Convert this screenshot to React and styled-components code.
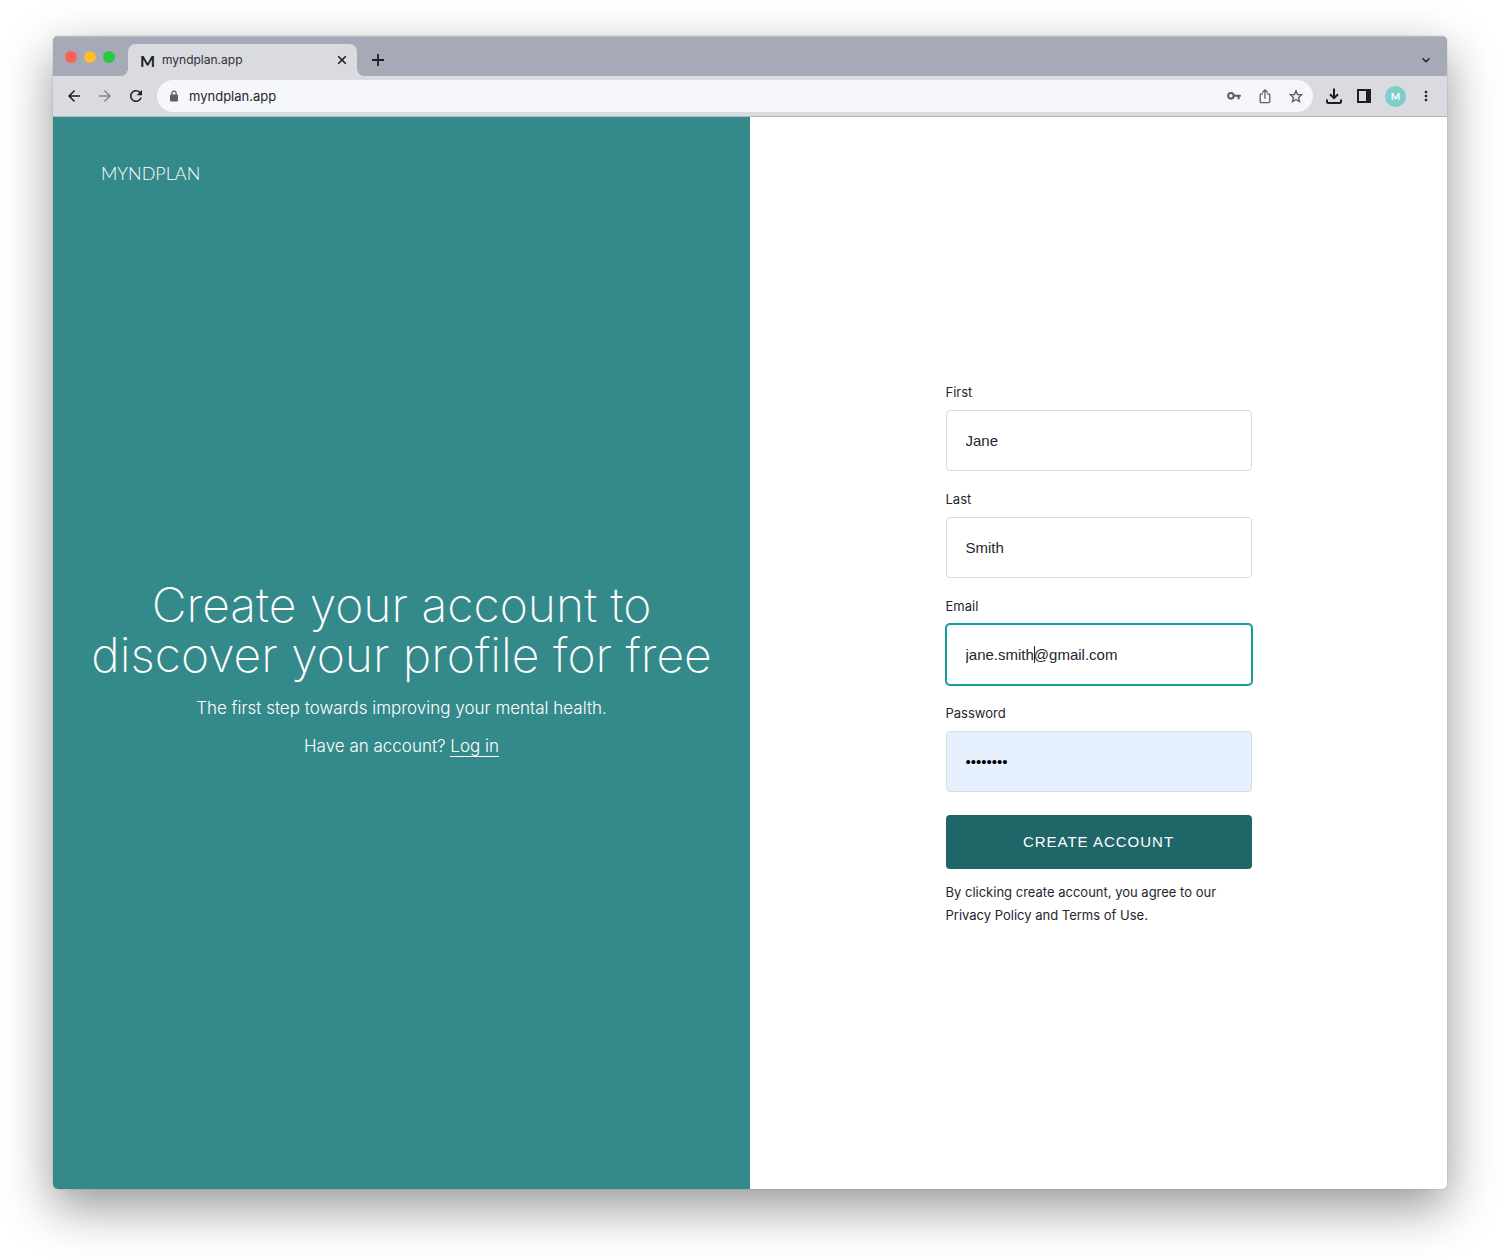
import React, { useState } from "react";
import styled, { createGlobalStyle, css } from "styled-components";
import {
  MdArrowBack,
  MdArrowForward,
  MdKeyboardArrowDown,
  MdMoreVert,
  MdRefresh,
} from "react-icons/md";

const fields = [
  { id: "first", label: "First", type: "text", value: "Jane" },
  { id: "last", label: "Last", type: "text", value: "Smith" },
  { id: "email", label: "Email", type: "email", value: "jane.smith@gmail.com", active: true },
  { id: "password", label: "Password", type: "password", value: "password", filled: true },
];

function CloseIcon() {
  return (
    <svg width="14" height="14" viewBox="0 0 14 14" stroke="#1d1e22" strokeWidth="1.6">
      <path d="M3.2 3.2l7.6 7.6M10.8 3.2l-7.6 7.6" />
    </svg>
  );
}

function PlusIcon() {
  return (
    <svg width="16" height="16" viewBox="0 0 16 16" stroke="#1d1e22" strokeWidth="1.8">
      <path d="M8 2v12M2 8h12" />
    </svg>
  );
}

function LockIcon() {
  return (
    <svg width="12" height="12" viewBox="0 0 12 12">
      <rect x="2" y="4.4" width="8" height="7" rx="1" fill="#5c5e66" />
      <path d="M3.9 5V3.2a2.1 2.1 0 0 1 4.2 0V5" fill="none" stroke="#5c5e66" strokeWidth="1.3" />
    </svg>
  );
}

function KeyIcon() {
  return (
    <svg width="16" height="16" viewBox="0 0 16 16" fill="none" stroke="#5c5e66">
      <circle cx="4.9" cy="7.8" r="2.8" strokeWidth="2.1" />
      <path d="M7.6 7.8h7.2M12.6 7.8v3.4" strokeWidth="2" />
    </svg>
  );
}

function ShareIcon() {
  return (
    <svg width="16" height="16" viewBox="0 0 16 16" fill="none" stroke="#5c5e66" strokeWidth="1.3">
      <path
        d="M6 5.8H4.4c-.7 0-1.2.5-1.2 1.2v6.5c0 .7.5 1.2 1.2 1.2h7.2c.7 0 1.2-.5 1.2-1.2V7c0-.7-.5-1.2-1.2-1.2H10"
      />
      <path d="M8 10.8V2.2M5.4 4.5L8 1.9l2.6 2.6" />
    </svg>
  );
}

function StarIcon() {
  return (
    <svg width="16" height="16" viewBox="0 0 16 16" fill="none" stroke="#5c5e66" strokeWidth="1.4">
      <path d="M8 2.8l1.6 3.7 4 .4-3 2.7.9 4L8 11.5l-3.5 2.1.9-4-3-2.7 4-.4z" />
    </svg>
  );
}

function DownloadIcon() {
  return (
    <svg width="18" height="18" viewBox="0 0 18 18" fill="none" stroke="#1d1e22" strokeWidth="2">
      <path d="M9 1.5v9M5 7.2l4 4 4-4M2 12.5v2.2c0 .7.6 1.3 1.3 1.3h11.4c.7 0 1.3-.6 1.3-1.3v-2.2" />
    </svg>
  );
}

function SidePanelIcon() {
  return (
    <svg width="14" height="14" viewBox="0 0 14 14">
      <path d="M1 1h12v12H1z" fill="none" stroke="#1d1e22" strokeWidth="2" />
      <path d="M9 1h4v12H9z" fill="#1d1e22" />
    </svg>
  );
}

function Browser({ children }) {
  return (
    <Window>
      <TabBar>
        <Lights>
          <Light $color="#ff5f57" />
          <Light $color="#febc2e" />
          <Light $color="#28c840" />
        </Lights>
        <Tab>
          <Favicon>M</Favicon>
          <TabTitle>myndplan.app</TabTitle>
          <IconButton aria-label="Close tab" $size={14}>
            <CloseIcon />
          </IconButton>
        </Tab>
        <IconButton aria-label="New tab" $size={16}>
          <PlusIcon />
        </IconButton>
        <Spacer />
        <IconButton aria-label="Search tabs" $size={16}>
          <MdKeyboardArrowDown />
        </IconButton>
      </TabBar>
      <Toolbar>
        <NavButtons>
          <IconButton aria-label="Back" $size={18}>
            <MdArrowBack />
          </IconButton>
          <IconButton aria-label="Forward" $size={18} $color="#86888f">
            <MdArrowForward />
          </IconButton>
          <IconButton aria-label="Reload" $size={18}>
            <MdRefresh />
          </IconButton>
        </NavButtons>
        <AddressBar>
          <LockIcon />
          <Address aria-label="Address" defaultValue="myndplan.app" />
          <AddressActions>
            <IconButton aria-label="Passwords" $size={16}>
              <KeyIcon />
            </IconButton>
            <IconButton aria-label="Share" $size={16}>
              <ShareIcon />
            </IconButton>
            <IconButton aria-label="Bookmark" $size={16}>
              <StarIcon />
            </IconButton>
          </AddressActions>
        </AddressBar>
        <ToolActions>
          <IconButton aria-label="Downloads" $size={18}>
            <DownloadIcon />
          </IconButton>
          <IconButton aria-label="Side panel" $size={18}>
            <SidePanelIcon />
          </IconButton>
          <Avatar>M</Avatar>
          <IconButton aria-label="Menu" $size={16}>
            <MdMoreVert />
          </IconButton>
        </ToolActions>
      </Toolbar>
      {children}
    </Window>
  );
}

function SignUpForm() {
  const [values, setValues] = useState(
    Object.fromEntries(fields.map((field) => [field.id, field.value]))
  );

  const handleChange = (e) => {
    setValues({ ...values, [e.target.id]: e.target.value });
  };

  return (
    <Form onSubmit={(e) => e.preventDefault()}>
      {fields.map((field) => (
        <Field key={field.id}>
          <Label htmlFor={field.id}>{field.label}</Label>
          <InputWrap>
            <Input
              id={field.id}
              type={field.type}
              value={values[field.id]}
              onChange={handleChange}
              $active={field.active}
              $filled={field.filled}
            />
            {field.active && <Caret />}
          </InputWrap>
        </Field>
      ))}
      <SubmitButton type="submit">CREATE ACCOUNT</SubmitButton>
      <Terms>
        By clicking create account, you agree to our
        <br />
        <TermsLink href="#privacy">Privacy Policy</TermsLink> and{" "}
        <TermsLink href="#terms">Terms of Use</TermsLink>.
      </Terms>
    </Form>
  );
}

function App() {
  return (
    <Page>
      <GlobalStyle />
      <Browser>
        <Content>
          <Intro>
            <Logo>MYNDPLAN</Logo>
            <Hero>
              <Title>
                Create your account to
                <br />
                discover your profile for free
              </Title>
              <Text>The first step towards improving your mental health.</Text>
              <Text>
                Have an account? <LoginLink href="#login">Log in</LoginLink>
              </Text>
            </Hero>
          </Intro>
          <FormPanel>
            <SignUpForm />
          </FormPanel>
        </Content>
      </Browser>
    </Page>
  );
}

const GlobalStyle = createGlobalStyle`
  * {
    box-sizing: border-box;
  }

  body {
    margin: 0;
    background: #fff;
    color: #24262f;
    font-family: Inter, sans-serif;
  }
`;

const Page = styled.div`
  display: flex;
  min-height: 100vh;
  padding: 36px 53px 70px;
`;

const Window = styled.div`
  flex: 1;
  display: flex;
  flex-direction: column;
  min-width: 0;
  overflow: hidden;
  border-radius: 5px;
  box-shadow: 0 0 1px rgba(0, 0, 0, 0.5), 0 18px 50px rgba(0, 0, 0, 0.42);
`;

const TabBar = styled.div`
  display: flex;
  align-items: center;
  height: 40px;
  padding: 6px 13px 0 12px;
  background: #a6aab6;
  border-top: 1px solid #bcbfc8;
`;

const Lights = styled.div`
  display: flex;
  gap: 7px;
  padding-bottom: 6px;
  margin-right: 13px;
`;

const Light = styled.span`
  width: 12px;
  height: 12px;
  border-radius: 50%;
  background: ${(props) => props.$color};
`;

const Tab = styled.div`
  position: relative;
  display: flex;
  align-items: center;
  align-self: flex-end;
  gap: 8px;
  width: 229px;
  height: 32px;
  padding: 0 8px 0 12px;
  margin-right: 13px;
  border-radius: 8px 8px 0 0;
  background: #dadbe0;

  &::before,
  &::after {
    content: "";
    position: absolute;
    bottom: 0;
    width: 8px;
    height: 8px;
  }

  &::before {
    right: 100%;
    background: radial-gradient(circle at 0 0, transparent 8px, #dadbe0 8px);
  }

  &::after {
    left: 100%;
    background: radial-gradient(circle at 100% 0, transparent 8px, #dadbe0 8px);
  }
`;

const Favicon = styled.span`
  width: 14px;
  color: #1d1e22;
  font: 700 16px Lato, sans-serif;
`;

const TabTitle = styled.span`
  flex: 1;
  color: #2d2e34;
  font-size: 12px;
  line-height: 14px;
`;

const IconButton = styled.button`
  display: flex;
  align-items: center;
  justify-content: center;
  flex-shrink: 0;
  width: ${(props) => props.$size}px;
  height: ${(props) => props.$size}px;
  padding: 0;
  border: none;
  background: none;
  color: ${(props) => props.$color || "#1d1e22"};
  font-size: ${(props) => props.$size}px;
  cursor: pointer;
`;

const Spacer = styled.div`
  flex: 1;
`;

const Toolbar = styled.div`
  display: flex;
  align-items: center;
  height: 41px;
  padding: 0 13px 0 12px;
  background: #dadbe0;
  border-bottom: 1px solid #b4b5ba;
`;

const NavButtons = styled.div`
  display: flex;
  gap: 13px;
  margin-right: 12px;
`;

const AddressBar = styled.div`
  flex: 1;
  display: flex;
  align-items: center;
  height: 32px;
  padding: 0 9px 0 11px;
  border-radius: 16px;
  background: #f6f7fa;
`;

const Address = styled.input`
  flex: 1;
  min-width: 0;
  margin-left: 9px;
  padding: 0;
  border: none;
  outline: none;
  background: none;
  color: #24262f;
  font: 13px Inter, sans-serif;
`;

const AddressActions = styled.div`
  display: flex;
  gap: 15px;
`;

const ToolActions = styled.div`
  display: flex;
  align-items: center;
  gap: 12px;
  margin-left: 12px;
`;

const Avatar = styled.span`
  display: flex;
  align-items: center;
  justify-content: center;
  width: 21px;
  height: 21px;
  border-radius: 50%;
  background: #7ececa;
  color: #fff;
  font: 700 10px Lato, sans-serif;
`;

const Content = styled.main`
  flex: 1;
  display: grid;
  grid-template-columns: 1fr 1fr;
`;

const Intro = styled.section`
  display: flex;
  flex-direction: column;
  padding: 45px 24px 34px;
  background: #348a8a;
  color: #fff;
`;

const Logo = styled.div`
  padding-left: 24px;
  font: 300 18px/22px Lato, sans-serif;
`;

const Hero = styled.div`
  flex: 1;
  display: flex;
  flex-direction: column;
  justify-content: center;
  text-align: center;
`;

const Title = styled.h1`
  margin: 0 0 15px;
  font-size: 48px;
  font-weight: 250;
  line-height: 50px;
`;

const Text = styled.p`
  margin: 0 0 12px;
  font-size: 17px;
  font-weight: 300;
  line-height: 26px;

  &:last-child {
    margin-bottom: 0;
  }
`;

const LoginLink = styled.a`
  color: inherit;
  text-decoration: none;
  border-bottom: 1px solid #fff;
`;

const FormPanel = styled.section`
  display: flex;
  align-items: center;
  justify-content: center;
  padding: 26px 24px 24px;
  background: #fff;
`;

const Form = styled.form`
  width: 100%;
  max-width: 306px;
`;

const Field = styled.div`
  margin-bottom: 18px;
`;

const Label = styled.label`
  display: block;
  margin-bottom: 8px;
  font-size: 13px;
  line-height: 20px;
`;

const InputWrap = styled.div`
  position: relative;
`;

const Input = styled.input`
  display: block;
  width: 100%;
  height: 61px;
  padding: 0 19px;
  border: 1px solid #d5dedd;
  border-radius: 4px;
  outline: none;
  background: ${(props) => (props.$filled ? "#e6f0fe" : "#fff")};
  color: ${(props) => (props.$filled ? "#000" : "#24262f")};
  font: 15px "Liberation Sans", Arial, sans-serif;

  ${(props) =>
    props.$active &&
    css`
      border-color: #169c9c;
      box-shadow: 0 0 0 1px #169c9c;
    `}
`;

const Caret = styled.span`
  position: absolute;
  top: 22px;
  left: 88px;
  width: 1px;
  height: 17px;
  background: #24262f;
`;

const SubmitButton = styled.button`
  width: 100%;
  height: 54px;
  margin: 5px 0 12px;
  border: none;
  border-radius: 4px;
  background: #1f6668;
  color: #fff;
  font: 15px "Liberation Sans", Arial, sans-serif;
  letter-spacing: 1px;
  cursor: pointer;
`;

const Terms = styled.p`
  margin: 0;
  font-size: 13px;
  line-height: 23px;
`;

const TermsLink = styled.a`
  color: inherit;
  text-decoration: none;
`;

export default App;
